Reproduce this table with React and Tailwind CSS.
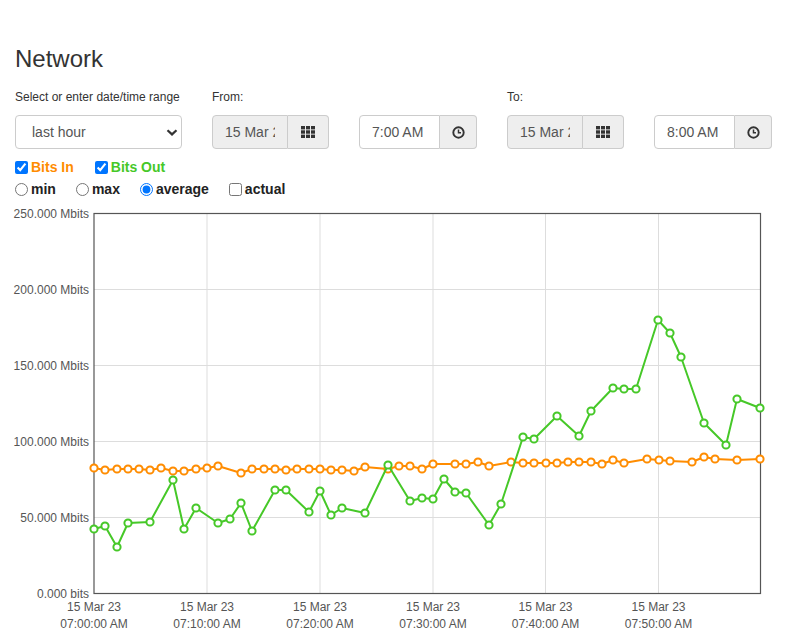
import React from "react";

const orange = [
  [94,468],[105,470],[117,469],[128,469],[139,469],[150,470],[161,468],[173,471],[184,471],[196,469],[207,468],[218,466],[241,473],[252,469],[264,469],[275,469],[286,470],[297,469],[309,469],[320,469],[331,470],[342,470],[354,471],[365,467],[388,469],[399,466],[410,466],[422,469],[433,464],[455,464],[466,464],[478,462],[489,466],[511,462],[523,463],[534,463],[546,463],[557,463],[568,462],[579,462],[591,462],[602,464],[613,460],[624,463],[647,459],[659,460],[670,461],[692,462],[704,457],[715,459],[737,460],[760,459]
];

const green = [
  [94,529],[105,526],[117,547],[128,523],[150,522],[173,480],[184,529],[196,508],[218,523],[230,519],[241,503],[252,531],[275,490],[286,490],[309,512],[320,491],[331,515],[342,508],[365,513],[388,465],[410,501],[422,498],[433,499],[444,479],[455,492],[466,493],[489,525],[501,504],[523,437],[534,439],[557,416],[579,436],[591,411],[613,388],[624,389],[636,389],[658,320],[670,333],[681,357],[704,423],[726,445],[737,399],[760,408]
];

const ORANGE = "#ff8c00";
const GREEN = "#46c828";

function GridIcon() {
  return (
    <svg width="14" height="12" viewBox="0 0 14 12" fill="#333">
      {[0, 5, 10].map((x) =>
        [0, 4.3, 8.6].map((y) => <rect key={x + "-" + y} x={x} y={y} width="4" height="3.4" />)
      )}
    </svg>
  );
}

function ClockIcon() {
  return (
    <svg width="13" height="13" viewBox="0 0 13 13" fill="none" stroke="#333">
      <circle cx="6.5" cy="6.5" r="5.2" strokeWidth="1.9" />
      <path d="M6.5 3.4V6.8H9" strokeWidth="1.5" />
    </svg>
  );
}

function DateGroup({ value }) {
  return (
    <div className="flex h-[34px] w-[117px]">
      <input
        readOnly
        value={value}
        className="w-[76px] h-full px-[12px] text-[14px] text-[#555] bg-[#eee] border border-[#ccc] rounded-l-[4px] outline-none"
        style={{ fontFamily: "inherit" }}
      />
      <div className="w-[41px] h-full flex items-center justify-center bg-[#eee] border border-l-0 border-[#ccc] rounded-r-[4px]">
        <GridIcon />
      </div>
    </div>
  );
}

function TimeGroup({ value }) {
  return (
    <div className="flex h-[34px] w-[118px]">
      <input
        readOnly
        value={value}
        className="w-[81px] h-full px-[12px] text-[14px] text-[#555] bg-white border border-[#ccc] rounded-l-[4px] outline-none"
        style={{ fontFamily: "inherit" }}
      />
      <div className="w-[37px] h-full flex items-center justify-center bg-[#eee] border border-l-0 border-[#ccc] rounded-r-[4px]">
        <ClockIcon />
      </div>
    </div>
  );
}

function Chart() {
  const y0 = 593.5;
  const yTop = 213.5;
  const yFor = (v) => y0 - ((y0 - yTop) * v) / 250;
  const yTicks = [
    [250, "250.000 Mbits"],
    [200, "200.000 Mbits"],
    [150, "150.000 Mbits"],
    [100, "100.000 Mbits"],
    [50, "50.000 Mbits"],
    [0, "0.000 bits"],
  ];
  const xTicks = [
    [94, "07:00:00 AM"],
    [207, "07:10:00 AM"],
    [320, "07:20:00 AM"],
    [433, "07:30:00 AM"],
    [545.5, "07:40:00 AM"],
    [658.5, "07:50:00 AM"],
  ];
  const pts = (arr) => arr.map(([x, y]) => `${x},${y}`).join(" ");
  return (
    <svg width="787" height="431" viewBox="0 203 787 431" className="block mt-[4px]" style={{ fontFamily: '"Liberation Sans", Arial, sans-serif' }}>
      {yTicks.slice(1, 5).map(([v]) => (
        <line key={v} x1="94" x2="760" y1={yFor(v)} y2={yFor(v)} stroke="#ddd" strokeWidth="1" />
      ))}
      {xTicks.slice(1).map(([x]) => (
        <line key={x} x1={x} x2={x} y1={yTop} y2={y0} stroke="#ddd" strokeWidth="1" />
      ))}
      <rect x="94" y={yTop} width="666.5" height={y0 - yTop} fill="none" stroke="#555" strokeWidth="1.2" />
      {yTicks.map(([v, label]) => (
        <text key={label} x="89" y={yFor(v) + 4} textAnchor="end" fontSize="12" fill="#555">
          {label}
        </text>
      ))}
      {xTicks.map(([x, t]) => (
        <g key={t}>
          <text x={x} y="611" textAnchor="middle" fontSize="12" fill="#555">15 Mar 23</text>
          <text x={x} y="628" textAnchor="middle" fontSize="12" fill="#555">{t}</text>
        </g>
      ))}
      <polyline points={pts(orange)} fill="none" stroke={ORANGE} strokeWidth="2" strokeLinejoin="round" />
      {orange.map(([x, y], i) => (
        <circle key={"o" + i} cx={x} cy={y} r="3.6" fill="#fff" stroke={ORANGE} strokeWidth="2" />
      ))}
      <polyline points={pts(green)} fill="none" stroke={GREEN} strokeWidth="2" strokeLinejoin="round" />
      {green.map(([x, y], i) => (
        <circle key={"g" + i} cx={x} cy={y} r="3.6" fill="#fff" stroke={GREEN} strokeWidth="2" />
      ))}
    </svg>
  );
}

export default function App() {
  return (
    <div className="bg-white text-[#333] w-[787px] h-[634px] overflow-hidden" style={{ fontFamily: '"Liberation Sans", Arial, sans-serif' }}>
      <div className="px-[15px] pt-[46px]">
        <h1 className="text-[24px] leading-[26px] font-normal m-0">Network</h1>
        <div className="flex gap-[30px] mt-[17px]">
          <div className="w-[167px] flex flex-col">
            <div className="text-[12px] leading-[17px] mb-[9px]">Select or enter date/time range</div>
            <div className="relative h-[34px]">
              <select
                defaultValue="last hour"
                className="appearance-none w-full h-full pl-[16px] pr-[24px] text-[14px] text-[#555] bg-white border border-[#ccc] rounded-[4px] outline-none"
                style={{ fontFamily: "inherit" }}
              >
                <option>last hour</option>
                <option>last day</option>
                <option>last week</option>
              </select>
              <svg className="absolute right-[4px] top-[14px] pointer-events-none" width="12" height="7" viewBox="0 0 12 7" fill="none" stroke="#333" strokeWidth="2.2">
                <path d="M1.5 1.2L6 5.4L10.5 1.2" />
              </svg>
            </div>
          </div>
          <div className="flex flex-col">
            <div className="text-[12px] leading-[17px] mb-[9px]">From:</div>
            <div className="flex gap-[30px]">
              <DateGroup value="15 Mar 2023" />
              <TimeGroup value="7:00 AM" />
            </div>
          </div>
          <div className="flex flex-col">
            <div className="text-[12px] leading-[17px] mb-[9px]">To:</div>
            <div className="flex gap-[30px]">
              <DateGroup value="15 Mar 2023" />
              <TimeGroup value="8:00 AM" />
            </div>
          </div>
        </div>
        <div className="flex items-center gap-[21px] mt-[8px] h-[20px] text-[14px] font-bold leading-[20px]">
          <label className="flex items-center gap-[3px]">
            <input type="checkbox" defaultChecked className="m-0 w-[13px] h-[13px]" />
            <span className="text-[#ff8c00]">Bits In</span>
          </label>
          <label className="flex items-center gap-[3px]">
            <input type="checkbox" defaultChecked className="m-0 w-[13px] h-[13px]" />
            <span className="text-[#46c828]">Bits Out</span>
          </label>
        </div>
        <div className="flex items-center gap-[20px] mt-[2px] h-[20px] text-[14px] font-bold leading-[20px] text-[#222]">
          <label className="flex items-center gap-[3px]">
            <input type="radio" name="agg" className="m-0 w-[13px] h-[13px]" />
            <span>min</span>
          </label>
          <label className="flex items-center gap-[3px]">
            <input type="radio" name="agg" className="m-0 w-[13px] h-[13px]" />
            <span>max</span>
          </label>
          <label className="flex items-center gap-[3px]">
            <input type="radio" name="agg" defaultChecked className="m-0 w-[13px] h-[13px]" />
            <span>average</span>
          </label>
          <label className="flex items-center gap-[3px]">
            <input type="checkbox" className="m-0 w-[13px] h-[13px]" />
            <span>actual</span>
          </label>
        </div>
      </div>
      <Chart />
    </div>
  );
}
